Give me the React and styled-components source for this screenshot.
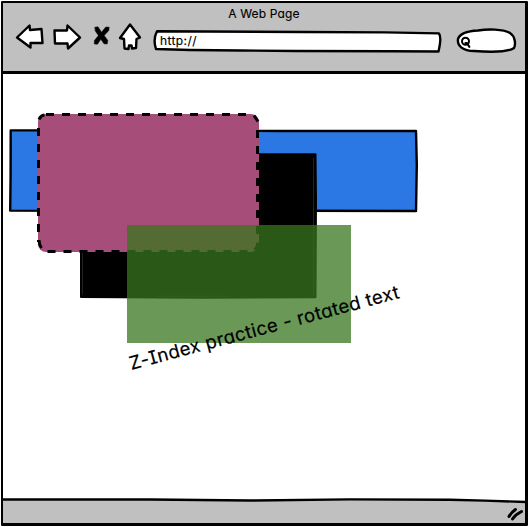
import React from 'react';
import styled, { createGlobalStyle } from 'styled-components';

const GlobalStyle = createGlobalStyle`
  * { box-sizing: border-box; }
  body { margin: 0; background: #fff; overflow: hidden; }
`;

const BrowserWindow = styled.main`
  width: 527px;
  height: 525px;
  margin: 1px;
  display: flex;
  flex-direction: column;
  border: 3px solid #000;
  border-top-width: 2px;
  border-left-width: 2px;
  border-radius: 1px;
  color: #000;
  font-family: Inter, 'Noto Sans', sans-serif;
  font-feature-settings: 'cv11', 'cv08';
`;

const Chrome = styled.header`
  height: 71px;
  flex: none;
  padding-top: 3px;
  background: #c0c0c0;
  border-bottom: 3px solid #000;
`;

const Title = styled.h1`
  margin: 0;
  height: 17px;
  text-align: center;
  font-size: 12px;
  line-height: 15px;
  font-weight: 400;
  letter-spacing: 0.15px;
  -webkit-text-stroke: 0.15px #000;
`;

const Toolbar = styled.div`
  display: flex;
  align-items: flex-start;
`;

const Drawing = styled.svg`
  display: block;
  flex: none;
  overflow: visible;
  fill: ${({ $fill }) => $fill || '#fff'};
  stroke: #000;
  stroke-width: ${({ $line }) => $line || 2.4};
  stroke-linejoin: round;
  stroke-linecap: round;
`;

const NavIcons = styled(Drawing)`
  width: 150px;
  height: 36px;
`;

const Field = styled.div`
  display: grid;
  flex: none;
  height: 36px;
  width: ${({ $width }) => $width}px;
  & > * { grid-area: 1 / 1; }
`;

const Address = styled.span`
  z-index: 1;
  padding: 10px 0 0 7px;
  font-size: 12px;
  line-height: 16px;
  letter-spacing: 0.4px;
  -webkit-text-stroke: 0.15px #000;
`;

const Canvas = styled.section`
  position: relative;
  flex: 1;
  background: #fff;
`;

const Shape = styled.div`
  position: absolute;
  left: ${({ $x }) => $x}px;
  top: ${({ $y }) => $y}px;
  width: ${({ $w }) => $w}px;
  height: ${({ $h }) => $h}px;
`;

const GreenPanel = styled(Shape)`
  background: rgba(56, 118, 29, 0.75);
`;

const RotatedText = styled.p`
  position: absolute;
  left: 128px;
  top: 277px;
  margin: 0;
  font-size: 18.5px;
  line-height: 24px;
  letter-spacing: 0.38px;
  white-space: nowrap;
  -webkit-text-stroke: 0.2px #000;
  transform: rotate(-15deg);
  transform-origin: 0 18px;
`;

const StatusBar = styled.footer`
  position: relative;
  z-index: 1;
  height: 25px;
  flex: none;
  background: #c0c0c0;
`;

export default function App() {
  return (
    <>
      <GlobalStyle />
      <BrowserWindow>
        <Chrome>
          <Title>A Web Page</Title>
          <Toolbar>
            <NavIcons viewBox="3 23 150 36" aria-label="Browser navigation">
              <path d="M17 37.5 29.5 25.5 30 30 41.5 29 42.5 43 30.5 43 30.5 47.5Z" />
              <path d="M54.5 30.5 67 30.5 67.5 25.5 80 37.5 68 48.5 67.5 43.5 55 43.5Z" />
              <path d="M95 27.2 98 26.8 101.5 32.2 105.8 27 109.2 27.2 108.8 30.5 104.2 35.5 107.8 40.5 107.2 44 104 43.8 100.8 39.2 97.5 44.2 94.3 44 94.4 40.5 98.4 35.6 95.3 31Z" fill="#000" strokeWidth="0.5" />
              <path d="M130 24.5 140 37.5 136.5 39 136 48 132 48.5 131.5 45.5 129 45.5 128.5 49 124.5 48.5 124 39 120 38Z" />
            </NavIcons>
            <Field $width={303}>
              <Address>http://</Address>
              <Drawing width="303" height="36" viewBox="153 23 303 36">
                <path d="M157 31.3 205 31.5 302 32 385 32.4 439 33.4C441 36 440 45 438.5 51.5L390 51.3 295 51 240 50.5 190 50 156 49C154 43 154.5 36 157 31.3Z" />
              </Drawing>
            </Field>
            <Drawing width="60" height="36" viewBox="456 23 60 36" aria-label="Search">
              <path d="M478 30.5C488 28.8 503 29 510 33C515 36 516 44 514 48C507 53 488 52 474 51C463 51 457 46 458 39C460 33 468 31 478 30.5Z" />
              <circle cx="465.5" cy="41.3" r="3.5" strokeWidth="2" />
              <path d="M465.5 43 467 43 469.3 46.8" strokeWidth="2.2" fill="none" />
            </Drawing>
          </Toolbar>
        </Chrome>

        <Canvas>
          <Shape $x={6} $y={55} $w={409} $h={83}>
            <Drawing width="409" height="83" viewBox="9 129 409 83" $fill="#2b78e4">
              <path d="M10.7 130.4 120 130.4 280 131 416 131 416.8 165 416 211 300 210.7 160 211 10.2 210.6 10.6 175Z" />
            </Drawing>
          </Shape>
          <Shape $x={77} $y={79} $w={237} $h={145}>
            <Drawing width="237" height="145" viewBox="80 153 237 145" $fill="#000" $line={2}>
              <path d="M81.2 154.3 315.5 154.3 316 200 315.5 297.3 200 297.7 81 297 81 250Z" />
              <path d="M82.5 252V294M313.5 158V295M157 296.2H229" stroke="#303030" strokeWidth="0.7" />
            </Drawing>
          </Shape>
          <Shape $x={35} $y={40} $w={221} $h={138}>
            <Drawing width="221" height="138" viewBox="38 114 221 138" $fill="#a64d79">
              <rect x="38" y="114" width="221" height="138" rx="8" stroke="none" />
              <g fill="none" strokeWidth="3" strokeLinecap="butt" strokeDasharray="8 8">
                <path d="M46 114.5H248" />
                <path d="M38.5 128V242" />
                <path d="M257.5 130V242" />
                <path d="M47.5 251.5H248" />
                <path d="M39 119.5Q40.5 115.5 44.5 115M39 240Q39 244.5 41.5 248M254 115.5 258 121.5M254.5 250Q257.5 247.5 258 242.5" strokeDasharray="none" />
              </g>
            </Drawing>
          </Shape>
          <GreenPanel $x={124} $y={151} $w={224} $h={118} />
          <RotatedText>Z-Index practice - rotated text</RotatedText>
        </Canvas>

        <StatusBar>
          <Drawing width="522" height="25" viewBox="3 498 522 25">
            <path d="M3 499.5H150L250 500.5 350 499.4 450 499.7 485 500.6 525 502V497H3Z" stroke="none" />
            <path d="M3 499.5H150L250 500.5 350 499.4 450 499.7 485 500.6 526 502" fill="none" />
            <path d="M509 516.5C510.5 514 512.5 511.5 515.5 509.5M512.5 519C514.5 516 517.5 513.5 521.5 511.5" fill="none" strokeWidth="3" />
          </Drawing>
        </StatusBar>
      </BrowserWindow>
    </>
  );
}
